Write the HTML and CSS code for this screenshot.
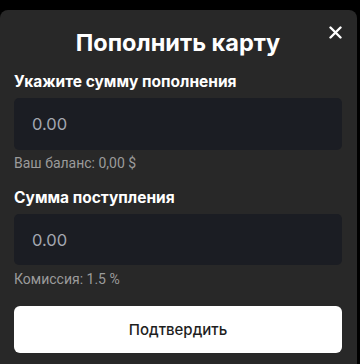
FILE: index.html
```html
<!DOCTYPE html>
<html lang="ru">
<head>
<meta charset="utf-8">
<link rel="stylesheet" href="styles.css">
</head>
<body>
<div class="card">
  <button class="close" aria-label="Закрыть">
    <svg width="13" height="13" viewBox="0 0 13 13"><path d="M1.5 1.5L11.5 11.5M11.5 1.5L1.5 11.5" stroke="#fff" stroke-width="2.4" stroke-linecap="round"/></svg>
  </button>
  <h1 class="title">Пополнить карту</h1>
  <div class="label">Укажите сумму пополнения</div>
  <input class="field" type="text" placeholder="0.00">
  <div class="hint">Ваш баланс: 0,00 $</div>
  <div class="label label-second">Сумма поступления</div>
  <input class="field field-second" type="text" placeholder="0.00">
  <div class="hint hint-second">Комиссия: 1.5 %</div>
  <button class="confirm">Подтвердить</button>
</div>
</body>
</html>
```

FILE: styles.css
```css
html, body {
  margin: 0;
  padding: 0;
  background: #000;
  height: 364px;
  overflow: hidden;
}
.card {
  position: relative;
  margin-top: 10px;
  width: 357px;
  height: 370px;
  box-sizing: border-box;
  background: #282828;
  border-radius: 8px;
  padding: 17px 15px 0 14px;
  font-family: Inter, "Noto Sans", sans-serif;
  display: flex;
  flex-direction: column;
}
.close {
  position: absolute;
  top: 16px;
  right: 15px;
  width: 13px;
  height: 13px;
  padding: 0;
  border: 0;
  background: none;
  display: flex;
}
.title {
  margin: 0;
  text-align: center;
  color: #fff;
  font-size: 23.5px;
  line-height: 32px;
  font-weight: 700;
}
.label {
  margin-top: 13px;
  color: #fff;
  font-size: 15.5px;
  line-height: 20px;
  font-weight: 700;
}
.label-second {
  margin-top: 17px;
}
.field {
  margin-top: 6px;
  height: 52px;
  box-sizing: border-box;
  border: 0;
  border-radius: 5px;
  background: #1b1d23;
  padding: 0 18px;
  font-family: Inter, sans-serif;
  font-size: 16.5px;
  color: #fff;
  outline: none;
}
.field::placeholder {
  color: #a3a7b0;
}
.field-second {
  height: 51px;
}
.hint {
  margin-top: 5px;
  color: #9b9b9b;
  font-family: Roboto, sans-serif;
  font-size: 14px;
  line-height: 16px;
}
.hint-second {
  margin-top: 6px;
}
.confirm {
  margin-top: 19px;
  height: 47px;
  border: 0;
  border-radius: 6px;
  background: #fff;
  color: #1e1e1e;
  font-family: Inter, sans-serif;
  font-size: 15px;
  font-weight: 500;
}
```
